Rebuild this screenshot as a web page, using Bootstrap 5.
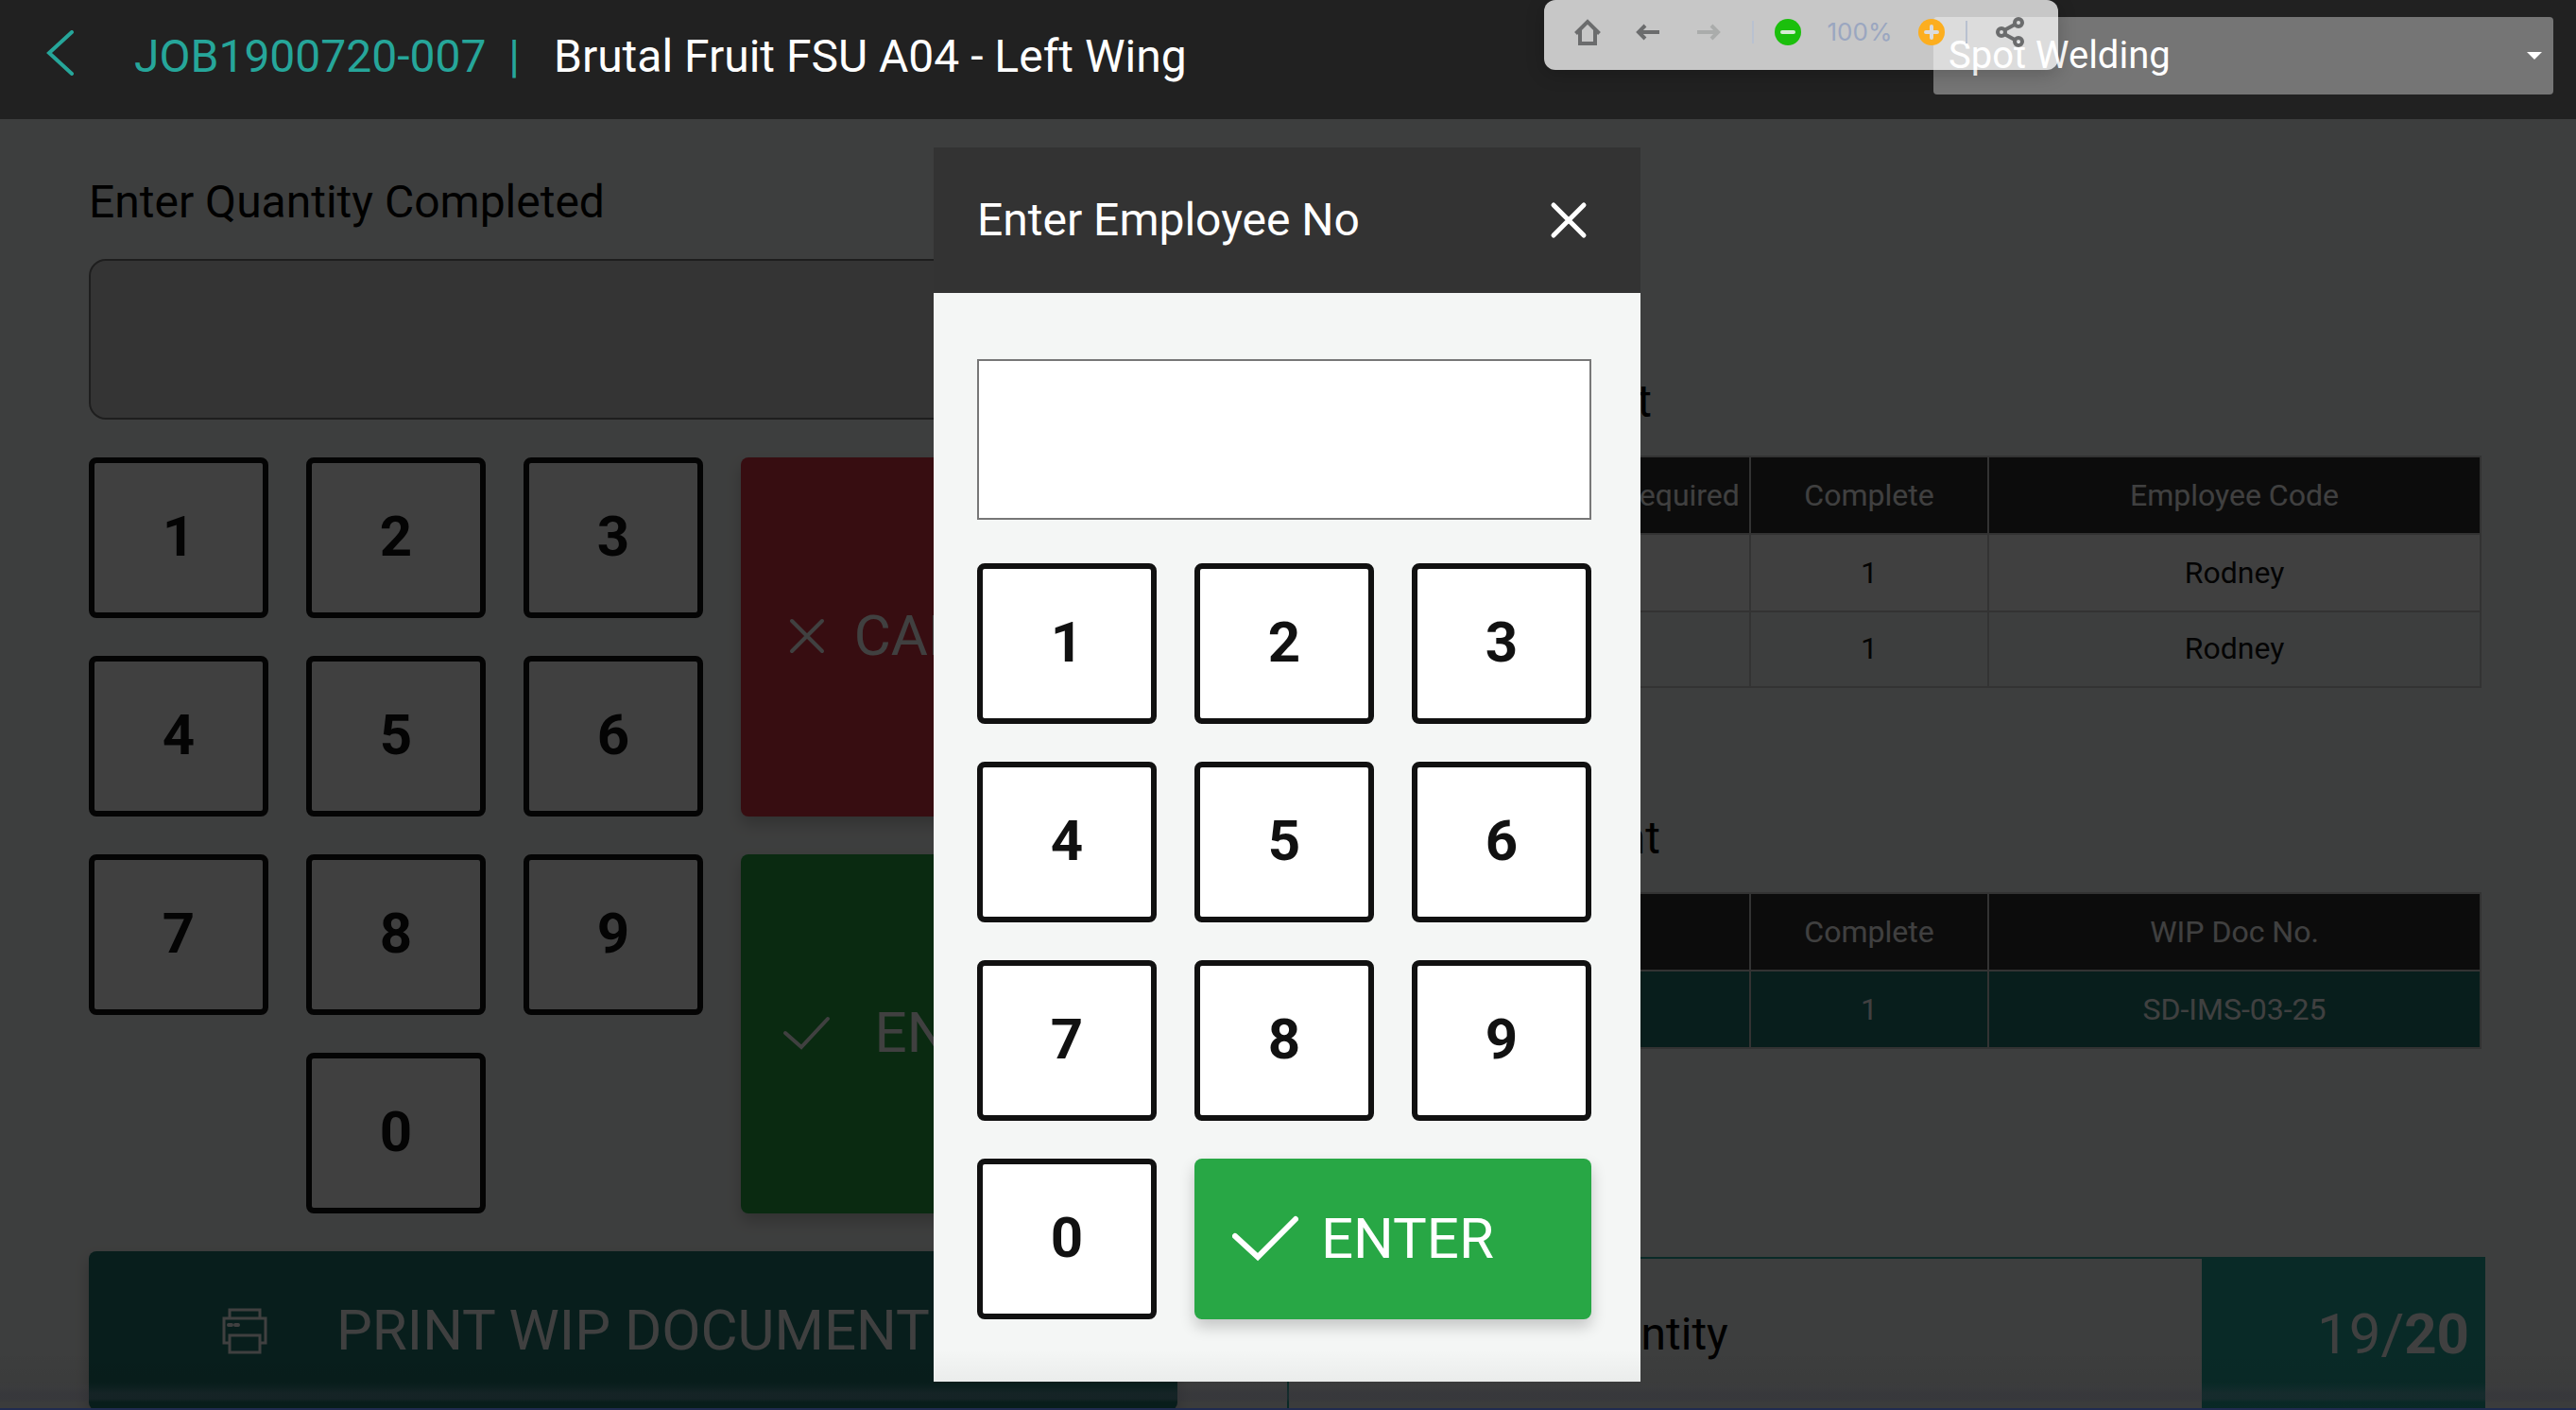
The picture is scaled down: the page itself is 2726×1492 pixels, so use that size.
<!DOCTYPE html>
<html lang="en">
<head>
<meta charset="utf-8">
<meta name="viewport" content="width=device-width, initial-scale=1">
<title>Spot Welding - Job</title>
<link rel="stylesheet" href="https://cdn.jsdelivr.net/npm/bootstrap@5.3.0/dist/css/bootstrap.min.css">
<style>
  body { font-family: Roboto, "Liberation Sans", sans-serif; background: #f4f6f5; color: #111; }
  .app { min-height: 100vh; }
  .topbar { height: 126px; background: #212121; padding: 0 24px 0 46px; font-size: 48px; line-height: 56px; }
  .topbar .crumbs { padding-top: 32px; }
  .teal-text { color: #26a69a; }
  .back { width: 36px; height: 52px; margin-right: 60px; }
  .jobno { margin-right: 36px; }
  .process { width: 656px; margin-top: 18px; }
  .process select { height: 82px; background: #757575; color: #fff; border: 0; border-radius: 4px; font-size: 40px; line-height: 48px; padding: 0 48px 0 16px; appearance: none; }
  .process svg { right: 12px; top: 37px; }
  .tools { right: 548px; height: 74px; padding: 0 35px 6px 30px; background: rgba(255,255,255,.75); border-radius: 12px; box-shadow: 0 4px 20px rgba(0,0,0,.2); color: #666; z-index: 5; }
  .tools button { width: 32px; height: 32px; }
  .tools .trio { gap: 32px; margin-right: 10px; }
  .tools .rule { width: 2px; height: 24px; margin: 0 20px; background: #b9c1d0; }
  .tools .share { margin-left: 9px; }
  .zoomlevel { width: 120px; font: 26px/32px Inter, "Liberation Sans", sans-serif; color: #9aa6c0; text-align: center; }

  .workspace { padding: 60px 96px 0 94px; }
  .entry-side { flex: 1152 1 0; min-width: 0; }
  .info-side { flex: 1268 1 0; min-width: 0; margin-left: 116px; }
  .heading48 { font-size: 48px; line-height: 56px; font-weight: 400; color: #000; }
  .qty { height: 170px; margin: 32px 0 40px; background: #d0d0d0; border: 2px solid #777; border-radius: 18px; font-size: 60px; }
  .pad { display: grid; grid-template-columns: 190px 190px 190px; grid-auto-rows: 170px; gap: 40px; }
  .pad-wide { grid-template-columns: 190px 190px 190px 1fr; }
  .key { border: 6px solid #111; border-radius: 8px; background: #fff; color: #111; font-size: 60px; line-height: 72px; font-weight: 700; padding: 0 0 2px; }
  .zero { grid-column: 2; }
  .act { border: 0; border-radius: 8px; color: #fff; font-size: 60px; line-height: 72px; box-shadow: 0 8px 16px rgba(0,0,0,.2); }
  .tall { padding: 0 96px 2px 40px; grid-column: 4; }
  .cancel { background: #dc3545; grid-row: 1 / 3; }
  .enter { background: #28a745; }
  .pad-wide .enter { grid-row: 3 / 5; }
  .print { background: #207870; height: 168px; margin-top: 40px; padding: 0 40px 0 140px; border-radius: 8px; gap: 72px; }

  .ops { margin-top: 211px; margin-right: 4px; }
  .ops + .ops { margin-top: 131px; }
  .ops .heading48 { width: 386px; height: 56px; margin-bottom: 29px; text-align: right; white-space: nowrap; }
  .ops + .ops .heading48 { width: 395px; }
  .joblist { width: 100%; table-layout: fixed; font-size: 32px; line-height: 40px; }
  .joblist th, .joblist td { height: 82px; border: 2px solid #ccc; text-align: center; font-weight: 400; padding: 0 14px; }
  .joblist th { background: #333; color: #fff; }
  .joblist .plain td { background: #fff; }
  .joblist .plain + tr td { height: 80px; padding-bottom: 2px; }
  .joblist .picked td { background: #207870; color: #fff; }
  .summary { margin-top: 220px; height: 162px; border: 2px solid #26a69a; border-right: 0; border-bottom: 0; padding-left: 42px; }
  .count { width: 300px; background: #26a69a; color: #fff; font-size: 60px; line-height: 72px; padding-right: 17px; }

  .shade { background: rgba(0,0,0,.75); padding: 30px 2px 0 0; }
  .keypad-dialog { width: 748px; background: #f4f6f5; }
  .keypad-dialog header { height: 154px; padding: 0 54px 0 46px; background: #333; color: #fff; }
  .keypad-dialog header h2 { color: #fff; }
  .keypad-dialog .content { padding: 70px 52px 66px 46px; }
  .emp { height: 170px; border: 2px solid #777; border-radius: 0; margin-bottom: 46px; background: #fff; font-size: 60px; }
  .wide { grid-column: 2 / 4; padding: 0 40px; gap: 24px; }
  .foot-glow { height: 64px; z-index: 10; pointer-events: none; border-bottom: 2px solid #202b50;
    background: linear-gradient(rgba(0,0,0,0), rgba(0,0,0,.04) 34px, rgba(45,45,55,.12) 40px, rgba(45,45,55,.35) 46px, rgba(45,45,55,.35) 52px, rgba(0,0,0,.04) 56px, rgba(0,0,0,.04)); }
</style>
<script src="https://cdn.jsdelivr.net/npm/bootstrap@5.3.0/dist/js/bootstrap.bundle.min.js"></script>
</head>
<body>
<div class="app d-flex flex-column position-relative">
  <header class="topbar d-flex justify-content-between align-items-start text-white">
    <div class="crumbs d-flex align-items-start">
      <a href="#" class="back teal-text d-block lh-1" aria-label="Back"><svg class="d-block" width="36" height="48" fill="none" stroke="currentColor" stroke-width="4" stroke-linecap="round"><path d="M30 2 6 24l24 22"/></svg></a>
      <span class="jobno teal-text text-nowrap">JOB1900720-007 &nbsp;|</span>
      <span class="text-nowrap">Brutal Fruit FSU A04 - Left Wing</span>
    </div>
    <div class="process position-relative">
      <select class="w-100" aria-label="Process"><option>Spot Welding</option></select>
      <svg class="position-absolute" width="16" height="8"><path d="M0 0h16l-8 8z" fill="#fff"/></svg>
    </div>
  </header>

  <nav class="tools position-absolute top-0 d-flex align-items-center" aria-label="Viewer">
    <div class="trio d-flex">
      <button class="btn p-0 border-0 d-flex" aria-label="Home"><svg width="32" height="32" fill="none" stroke="#6b6c6d" stroke-width="4"><path d="M3.500 17.500 16 5l12.500 12.500M8 14v14h16V14"/></svg></button>
      <button class="btn p-0 border-0 d-flex" aria-label="Back"><svg width="32" height="32" fill="none" stroke="#6b6c6d" stroke-width="4"><path d="M28 16H6m7-7-7 7 7 7"/></svg></button>
      <button class="btn p-0 border-0 d-flex" aria-label="Forward"><svg width="32" height="32" fill="none" stroke="#aaacab" stroke-width="4"><path d="M4 16h22m-7-7 7 7-7 7"/></svg></button>
    </div>
    <span class="rule"></span>
    <button class="btn p-0 border-0 d-flex" aria-label="Zoom out"><svg width="32" height="32"><circle cx="16" cy="16" r="14" fill="#1bbf0c"/><path d="M10 16h12" stroke="#d6ecd3" stroke-width="4" stroke-linecap="round"/></svg></button>
    <span class="zoomlevel">100%</span>
    <button class="btn p-0 border-0 d-flex" aria-label="Zoom in"><svg width="32" height="32"><circle cx="16" cy="16" r="14" fill="#fcae1f"/><path d="M10 16h12M16 10v12" stroke="#dcdcdc" stroke-width="4" stroke-linecap="round"/></svg></button>
    <span class="rule"></span>
    <button class="btn share p-0 border-0 d-flex" aria-label="Share"><svg width="32" height="32" fill="none" stroke="#6b6c6d" stroke-width="4"><circle cx="7" cy="16" r="4"/><circle cx="25" cy="6" r="4"/><circle cx="25" cy="26" r="4"/><path d="m10 14 11-6M10 18l11 6"/></svg></button>
  </nav>

  <main class="position-relative flex-grow-1 overflow-hidden">
    <div class="workspace d-flex">
      <section class="entry-side">
        <label class="heading48 d-block" for="qty">Enter Quantity Completed</label>
        <input class="qty d-block w-100 px-4" id="qty" type="text">
        <div class="pad pad-wide">
          <button class="key">1</button><button class="key">2</button><button class="key">3</button>
          <button class="act cancel tall d-flex align-items-center">
            <svg width="60" height="44" fill="none" stroke="currentColor" stroke-width="4" stroke-linecap="round"><path d="m14 6 32 32M46 6 14 38"/></svg><span class="flex-grow-1">CANCEL</span></button>
          <button class="key">4</button><button class="key">5</button><button class="key">6</button>
          <button class="key">7</button><button class="key">8</button><button class="key">9</button>
          <button class="act enter tall d-flex align-items-center">
            <svg width="60" height="44" fill="none" stroke="currentColor" stroke-width="4" stroke-linecap="round"><path d="m7 22 17 15L52 7"/></svg><span class="flex-grow-1">ENTER</span></button>
          <button class="key zero">0</button>
        </div>
        <button class="act print w-100 d-flex align-items-center">
          <svg width="50" height="50" fill="none" stroke="currentColor" stroke-width="3"><path d="M9 11V3h32v8M9 38H3V12h44v26h-6M9 30h32v18H9z"/><path d="M8 19h3m4 0h3" stroke-width="4" stroke-linecap="round"/></svg>
          <span>PRINT WIP DOCUMENT</span></button>
      </section>

      <section class="info-side">
        <div class="ops">
          <h2 class="heading48">Prior Movement</h2>
          <table class="joblist">
            <colgroup><col><col style="width:152px"><col style="width:252px"><col style="width:521px"></colgroup>
            <thead><tr><th>Process</th><th>Required</th><th>Complete</th><th>Employee Code</th></tr></thead>
            <tbody>
              <tr class="plain"><td></td><td></td><td>1</td><td>Rodney</td></tr>
              <tr><td></td><td></td><td>1</td><td>Rodney</td></tr>
            </tbody>
          </table>
        </div>
        <div class="ops">
          <h2 class="heading48">Next Movement</h2>
          <table class="joblist">
            <colgroup><col><col style="width:152px"><col style="width:252px"><col style="width:521px"></colgroup>
            <thead><tr><th>Process</th><th></th><th>Complete</th><th>WIP Doc No.</th></tr></thead>
            <tbody><tr class="picked"><td></td><td></td><td>1</td><td>SD-IMS-03-25</td></tr></tbody>
          </table>
        </div>
        <div class="summary d-flex align-items-stretch justify-content-between">
          <span class="heading48 align-self-center">Completed Quantity</span>
          <span class="count d-flex align-items-center justify-content-end">19/<b>20</b></span>
        </div>
      </section>
    </div>

    <div class="shade position-absolute top-0 start-0 w-100 h-100 d-flex justify-content-center align-items-start">
      <div class="keypad-dialog" role="dialog" aria-labelledby="dlgTitle">
        <header class="d-flex align-items-center justify-content-between">
          <h2 class="heading48 m-0" id="dlgTitle">Enter Employee No</h2>
          <button class="btn p-0 border-0 text-white d-flex" aria-label="Close"><svg width="44" height="44" fill="none" stroke="currentColor" stroke-width="5" stroke-linecap="round"><path d="m6 6 32 32M38 6 6 38"/></svg></button>
        </header>
        <div class="content">
          <input class="emp d-block w-100 px-4" type="text" aria-labelledby="dlgTitle">
          <div class="pad">
            <button class="key">1</button><button class="key">2</button><button class="key">3</button>
            <button class="key">4</button><button class="key">5</button><button class="key">6</button>
            <button class="key">7</button><button class="key">8</button><button class="key">9</button>
            <button class="key">0</button>
            <button class="act enter wide d-flex align-items-center">
              <svg width="70" height="50" fill="none" stroke="currentColor" stroke-width="6" stroke-linecap="round"><path d="m3 22 24 22L67 4"/></svg><span>ENTER</span></button>
          </div>
        </div>
      </div>
    </div>
  </main>
  <div class="foot-glow position-absolute bottom-0 start-0 w-100"></div>
</div>
</body>
</html>
